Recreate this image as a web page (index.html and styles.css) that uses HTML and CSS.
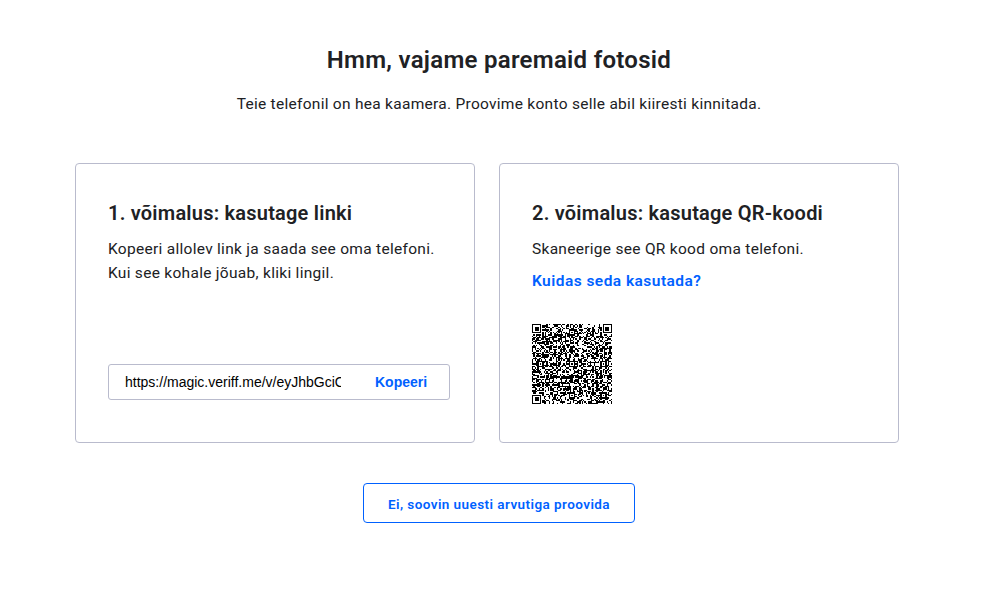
FILE: index.html
```html
<!DOCTYPE html>
<html lang="et">
<head>
<meta charset="utf-8">
<title>Hmm, vajame paremaid fotosid</title>
<link rel="stylesheet" href="styles.css">
</head>
<body>
<main class="page">
  <h1 class="title">Hmm, vajame paremaid fotosid</h1>
  <p class="lead">Teie telefonil on hea kaamera. Proovime konto selle abil kiiresti kinnitada.</p>
  <div class="cards">
    <section class="card">
      <h2 class="card-title">1. võimalus: kasutage linki</h2>
      <p class="text">Kopeeri allolev link ja saada see oma telefoni.<br>Kui see kohale jõuab, kliki lingil.</p>
      <div class="copy-box">
        <div class="url">https://magic.veriff.me/v/eyJhbGciO</div>
        <button class="copy">Kopeeri</button>
      </div>
    </section>
    <section class="card">
      <h2 class="card-title">2. võimalus: kasutage QR-koodi</h2>
      <p class="text">Skaneerige see QR kood oma telefoni.</p>
      <a class="help">Kuidas seda kasutada?</a>
      <svg class="qr" viewBox="0 0 61 61" shape-rendering="crispEdges"><path id="modules"/></svg>
    </section>
  </div>
  <button class="retry">Ei, soovin uuesti arvutiga proovida</button>
</main>
<script src="qr.js"></script>
</body>
</html>
```
FILE: styles.css
```css
* { box-sizing: border-box; }
body { margin: 0; background: #fff; color: #202124; font-family: Roboto, "Noto Sans", sans-serif; }
.page { display: flex; flex-direction: column; align-items: center; padding: 44px 0 0 2px; }
h1, h2, p { margin: 0; }
.title { font-size: 24px; line-height: 32px; font-weight: 600; letter-spacing: .28px; white-space: nowrap; }
.lead { margin-top: 16px; font-size: 15.5px; line-height: 24px; letter-spacing: .28px; white-space: nowrap; }
.cards { display: flex; gap: 24px; width: 824px; margin: 47px 24px 0 0; }
.card { width: 400px; height: 280px; padding: 35px 24px 0 32px; border: 1px solid #b9bbcd; border-radius: 4px; white-space: nowrap; }
.card-title { font-size: 20px; line-height: 28px; font-weight: 600; letter-spacing: .22px; }
.text { margin-top: 10px; font-size: 15.5px; line-height: 24px; letter-spacing: .29px; }
.copy-box { display: flex; align-items: center; width: 342px; height: 36px; margin-top: 79px; padding-left: 16px; border: 1px solid #b9bbcd; border-radius: 3px; }
.url { width: 216px; overflow: hidden; font: 14px/20px "Liberation Sans", sans-serif; color: #000; }
.copy { margin-left: 34px; padding: 0; border: 0; background: none; color: #0061ff; font: bold 14px/20px "Liberation Sans", sans-serif; }
.help { display: block; margin-top: 8px; color: #0061ff; font-size: 15.5px; line-height: 24px; font-weight: 600; letter-spacing: .46px; }
.qr { display: block; width: 80px; height: 80px; margin-top: 31px; fill: #000; }
.retry { width: 272px; height: 40px; margin-top: 40px; padding: 2px 0 0; border: 1px solid #0061ff; border-radius: 4px; background: #fff; color: #0061ff; font: 600 13.5px/20px Roboto, sans-serif; letter-spacing: .43px; white-space: nowrap; }
```
FILE: qr.js
```js
const size = 61;
let seed = 20731;
function random() {
  seed = (seed * 1103515245 + 12345) % 2147483648;
  return seed / 2147483648;
}
function ring(x, y, cx, cy) {
  return Math.max(Math.abs(x - cx), Math.abs(y - cy));
}
function dark(x, y) {
  for (const [cx, cy] of [[3, 3], [57, 3], [3, 57]]) {
    const r = ring(x, y, cx, cy);
    if (r <= 4) return r !== 2 && r !== 4;
  }
  for (const [cx, cy] of [[30, 6], [54, 30], [30, 30], [6, 30], [30, 54], [54, 54]]) {
    const r = ring(x, y, cx, cy);
    if (r <= 2) return r !== 1;
  }
  if (x === 6) return y % 2 === 0;
  if (y === 6) return x % 2 === 0;
  return random() < 0.5;
}
let path = "";
for (let y = 0; y < size; y++) {
  for (let x = 0; x < size; x++) {
    if (dark(x, y)) path += `M${x} ${y}h1v1h-1z`;
  }
}
document.getElementById("modules").setAttribute("d", path);
```
